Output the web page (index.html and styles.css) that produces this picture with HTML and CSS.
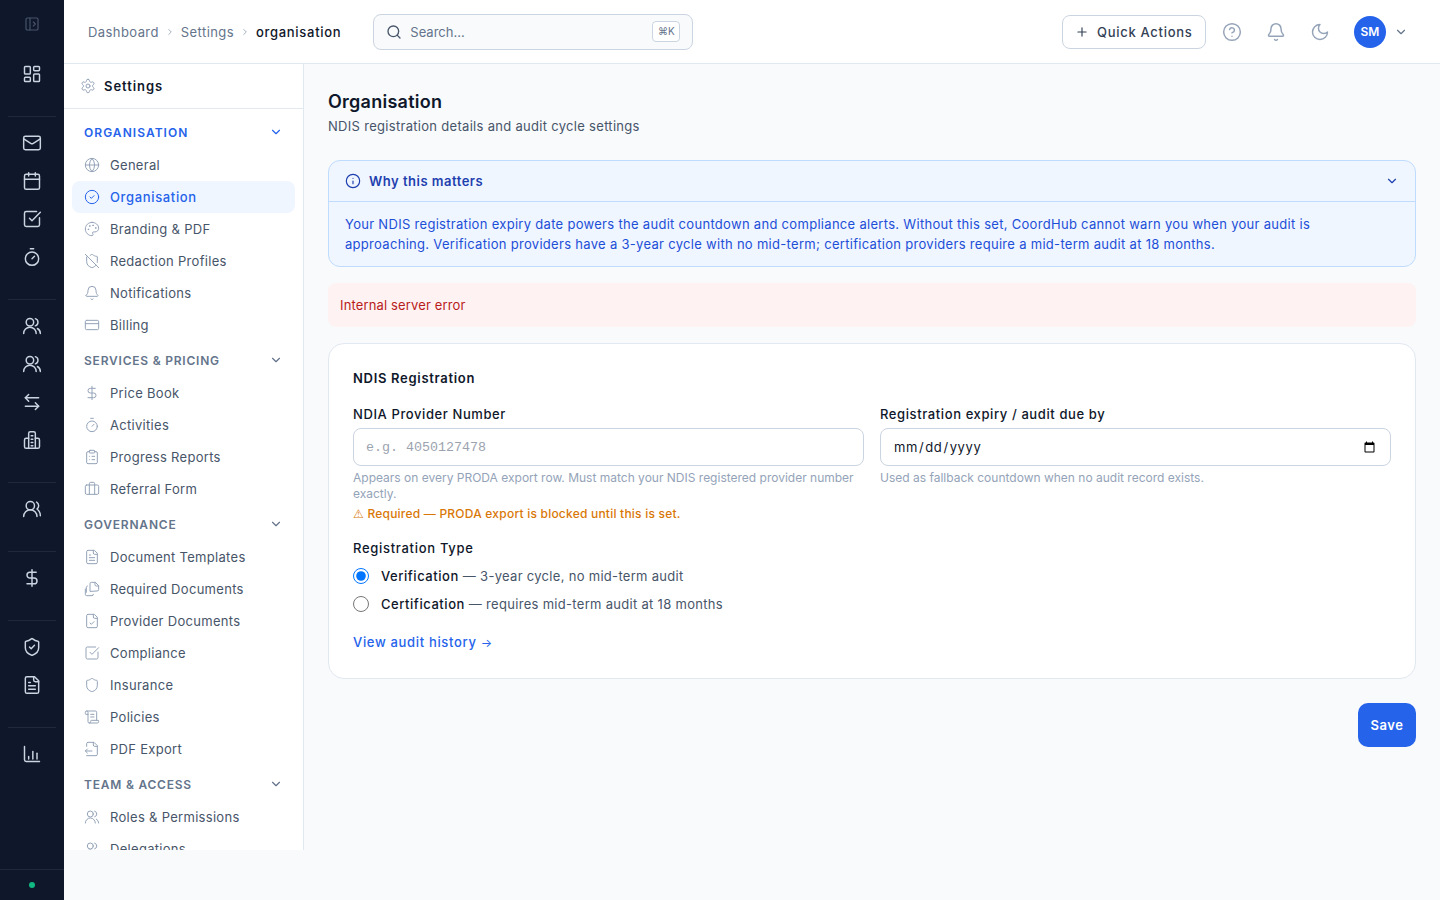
FILE: index.html
```html
<!DOCTYPE html>
<html lang="en">
<head>
    <meta charset="UTF-8">
    <meta name="viewport" content="width=device-width, initial-scale=1.0">
    <title>Organisation Settings</title>
    <link rel="stylesheet" href="styles.css">
</head>
<body>
    <svg class="sprite" xmlns="http://www.w3.org/2000/svg">
        <symbol id="i-panel" viewBox="0 0 24 24"><rect x="3" y="3" width="18" height="18" rx="2"/><path d="M9 3v18"/><path d="m14 9 3 3-3 3"/></symbol>
        <symbol id="i-dashboard" viewBox="0 0 24 24"><rect x="3" y="3" width="7" height="9" rx="1"/><rect x="14" y="3" width="7" height="5" rx="1"/><rect x="14" y="12" width="7" height="9" rx="1"/><rect x="3" y="16" width="7" height="5" rx="1"/></symbol>
        <symbol id="i-mail" viewBox="0 0 24 24"><rect x="2" y="4" width="20" height="16" rx="2"/><path d="m22 7-8.97 5.7a1.94 1.94 0 0 1-2.06 0L2 7"/></symbol>
        <symbol id="i-calendar" viewBox="0 0 24 24"><path d="M8 2v4"/><path d="M16 2v4"/><rect x="3" y="4" width="18" height="18" rx="2"/><path d="M3 10h18"/></symbol>
        <symbol id="i-check-square" viewBox="0 0 24 24"><path d="M21 10.5V19a2 2 0 0 1-2 2H5a2 2 0 0 1-2-2V5a2 2 0 0 1 2-2h12.5"/><path d="m9 11 3 3L22 4"/></symbol>
        <symbol id="i-timer" viewBox="0 0 24 24"><path d="M10 2h4"/><path d="m12 14 3-3"/><circle cx="12" cy="14" r="8"/></symbol>
        <symbol id="i-users" viewBox="0 0 24 24"><circle cx="9.5" cy="7.5" r="4.5"/><path d="M2 21a7.5 7.5 0 0 1 15 0"/><path d="M16 3.2a4.5 4.5 0 0 1 0 8.6"/><path d="M22 21a7 7 0 0 0-3.5-6"/></symbol>
        <symbol id="i-users-round" viewBox="0 0 24 24"><path d="M18 21a8 8 0 0 0-16 0"/><circle cx="10" cy="8" r="5"/><path d="M22 20c0-3.37-2-6.5-4-8a5 5 0 0 0-.45-8.3"/></symbol>
        <symbol id="i-arrows" viewBox="0 0 24 24"><path d="M8 3 4 7l4 4"/><path d="M4 7h16"/><path d="m16 21 4-4-4-4"/><path d="M20 17H4"/></symbol>
        <symbol id="i-building" viewBox="0 0 24 24"><path d="M8 22V4a2 2 0 0 1 2-2h4a2 2 0 0 1 2 2v18"/><path d="M8 10H5a2 2 0 0 0-2 2v8a2 2 0 0 0 2 2h14a2 2 0 0 0 2-2v-8a2 2 0 0 0-2-2h-3"/><path d="M11 7h2"/><path d="M11 11h2"/><path d="M11 15h2"/><path d="M11 19h2"/></symbol>
        <symbol id="i-dollar" viewBox="0 0 24 24"><path d="M12 2v20"/><path d="M17 5H9.5a3.5 3.5 0 0 0 0 7h5a3.5 3.5 0 0 1 0 7H6"/></symbol>
        <symbol id="i-shield-check" viewBox="0 0 24 24"><path d="M20 13c0 5-3.5 7.5-7.66 8.95a1 1 0 0 1-.67-.01C7.5 20.5 4 18 4 13V6a1 1 0 0 1 1-1c2 0 4.5-1.2 6.24-2.72a1.17 1.17 0 0 1 1.52 0C14.51 3.81 17 5 19 5a1 1 0 0 1 1 1z"/><path d="m9 12 2 2 4-4"/></symbol>
        <symbol id="i-shield" viewBox="0 0 24 24"><path d="M20 13c0 5-3.5 7.5-7.66 8.95a1 1 0 0 1-.67-.01C7.5 20.5 4 18 4 13V6a1 1 0 0 1 1-1c2 0 4.5-1.2 6.24-2.72a1.17 1.17 0 0 1 1.52 0C14.51 3.81 17 5 19 5a1 1 0 0 1 1 1z"/></symbol>
        <symbol id="i-shield-off" viewBox="0 0 24 24"><path d="m2 2 20 20"/><path d="M5 5a1 1 0 0 0-1 1v7c0 5 3.5 7.5 7.67 8.94a1 1 0 0 0 .67.01c2.35-.82 4.48-1.97 5.9-3.71"/><path d="M9.309 3.652A12.252 12.252 0 0 0 11.24 2.28a1.17 1.17 0 0 1 1.52 0C14.51 3.81 17 5 19 5a1 1 0 0 1 1 1v7a9.784 9.784 0 0 1-.08 1.264"/></symbol>
        <symbol id="i-file-text" viewBox="0 0 24 24"><path d="M15 2H6a2 2 0 0 0-2 2v16a2 2 0 0 0 2 2h12a2 2 0 0 0 2-2V7Z"/><path d="M14 2v4a2 2 0 0 0 2 2h4"/><path d="M10 9H8"/><path d="M16 13H8"/><path d="M16 17H8"/></symbol>
        <symbol id="i-file-check" viewBox="0 0 24 24"><path d="M15 2H6a2 2 0 0 0-2 2v16a2 2 0 0 0 2 2h12a2 2 0 0 0 2-2V7Z"/><path d="M14 2v4a2 2 0 0 0 2 2h4"/><path d="m9 15 2 2 4-4"/></symbol>
        <symbol id="i-files" viewBox="0 0 24 24"><path d="M9 15V4a2 2 0 0 1 2-2h6l5 5v6a2 2 0 0 1-2 2Z"/><path d="M16.5 2v3.5a2 2 0 0 0 2 2H22"/><path d="M5 7.5a2 2 0 0 0-1.5 2V17"/><path d="M2 12v8a2 2 0 0 0 2 2h8a2 2 0 0 0 2-2"/></symbol>
        <symbol id="i-file-export" viewBox="0 0 24 24"><path d="M4 22h14a2 2 0 0 0 2-2V7l-5-5H6a2 2 0 0 0-2 2v4"/><path d="M14 2v4a2 2 0 0 0 2 2h4"/><path d="M2 15h10"/><path d="m5 12-3 3 3 3"/></symbol>
        <symbol id="i-chart" viewBox="0 0 24 24"><path d="M3 3v16a2 2 0 0 0 2 2h16"/><path d="M8 18v-3"/><path d="M13 18V9"/><path d="M18 18v-7"/></symbol>
        <symbol id="i-gear" viewBox="0 0 24 24"><path d="M12.22 2h-.44a2 2 0 0 0-2 2v.18a2 2 0 0 1-1 1.73l-.43.25a2 2 0 0 1-2 0l-.15-.08a2 2 0 0 0-2.73.73l-.22.38a2 2 0 0 0 .73 2.73l.15.1a2 2 0 0 1 1 1.72v.51a2 2 0 0 1-1 1.74l-.15.09a2 2 0 0 0-.73 2.73l.22.38a2 2 0 0 0 2.73.73l.15-.08a2 2 0 0 1 2 0l.43.25a2 2 0 0 1 1 1.73V20a2 2 0 0 0 2 2h.44a2 2 0 0 0 2-2v-.18a2 2 0 0 1 1-1.73l.43-.25a2 2 0 0 1 2 0l.15.08a2 2 0 0 0 2.73-.73l.22-.39a2 2 0 0 0-.73-2.73l-.15-.08a2 2 0 0 1-1-1.74v-.5a2 2 0 0 1 1-1.74l.15-.09a2 2 0 0 0 .73-2.73l-.22-.38a2 2 0 0 0-2.73-.73l-.15.08a2 2 0 0 1-2 0l-.43-.25a2 2 0 0 1-1-1.73V4a2 2 0 0 0-2-2z"/><circle cx="12" cy="12" r="3"/></symbol>
        <symbol id="i-globe" viewBox="0 0 24 24"><circle cx="12" cy="12" r="10"/><path d="M12 2a14.5 14.5 0 0 0 0 20 14.5 14.5 0 0 0 0-20"/><path d="M2 12h20"/></symbol>
        <symbol id="i-circle-check" viewBox="0 0 24 24"><circle cx="12" cy="12" r="10"/><path d="m9 12 2 2 4-4"/></symbol>
        <symbol id="i-palette" viewBox="0 0 24 24"><circle cx="13.5" cy="6.5" r=".5"/><circle cx="17.5" cy="10.5" r=".5"/><circle cx="8.5" cy="7.5" r=".5"/><circle cx="6.5" cy="12.5" r=".5"/><path d="M12 2C6.5 2 2 6.5 2 12s4.5 10 10 10c.926 0 1.648-.746 1.648-1.688 0-.437-.18-.835-.437-1.125-.29-.289-.438-.652-.438-1.125a1.64 1.64 0 0 1 1.668-1.668h1.996c3.051 0 5.555-2.503 5.555-5.554C21.965 6.012 17.461 2 12 2z"/></symbol>
        <symbol id="i-bell" viewBox="0 0 24 24"><path d="M10.268 21a2 2 0 0 0 3.464 0"/><path d="M3.262 15.326A1 1 0 0 0 4 17h16a1 1 0 0 0 .74-1.673C19.41 13.956 18 12.499 18 8A6 6 0 0 0 6 8c0 4.499-1.411 5.956-2.738 7.326"/></symbol>
        <symbol id="i-card" viewBox="0 0 24 24"><rect x="2" y="5" width="20" height="14" rx="2"/><path d="M2 10h20"/></symbol>
        <symbol id="i-clipboard" viewBox="0 0 24 24"><rect x="8" y="2" width="8" height="4" rx="1"/><path d="M16 4h2a2 2 0 0 1 2 2v14a2 2 0 0 1-2 2H6a2 2 0 0 1-2-2V6a2 2 0 0 1 2-2h2"/><path d="M12 11h4"/><path d="M12 16h4"/><path d="M8 11h.01"/><path d="M8 16h.01"/></symbol>
        <symbol id="i-briefcase" viewBox="0 0 24 24"><path d="M16 20V4a2 2 0 0 0-2-2h-4a2 2 0 0 0-2 2v16"/><rect x="2" y="6" width="20" height="14" rx="2"/></symbol>
        <symbol id="i-scroll" viewBox="0 0 24 24"><path d="M15 12h-5"/><path d="M15 8h-5"/><path d="M19 17V5a2 2 0 0 0-2-2H4"/><path d="M8 21h12a2 2 0 0 0 2-2v-1a1 1 0 0 0-1-1H11a1 1 0 0 0-1 1v1a2 2 0 1 1-4 0V5a2 2 0 1 0-4 0v2a1 1 0 0 0 1 1h3"/></symbol>
        <symbol id="i-chevron-down" viewBox="0 0 24 24"><path d="m6 9 6 6 6-6"/></symbol>
        <symbol id="i-chevron-right" viewBox="0 0 24 24"><path d="m9 18 6-6-6-6"/></symbol>
        <symbol id="i-search" viewBox="0 0 24 24"><circle cx="11" cy="11" r="8"/><path d="m21 21-4.3-4.3"/></symbol>
        <symbol id="i-plus" viewBox="0 0 24 24"><path d="M5 12h14"/><path d="M12 5v14"/></symbol>
        <symbol id="i-help" viewBox="0 0 24 24"><circle cx="12" cy="12" r="10"/><path d="M9.09 9a3 3 0 0 1 5.83 1c0 2-3 3-3 3"/><path d="M12 17h.01"/></symbol>
        <symbol id="i-moon" viewBox="0 0 24 24"><path d="M12 3a6 6 0 0 0 9 9 9 9 0 1 1-9-9Z"/></symbol>
        <symbol id="i-info" viewBox="0 0 24 24"><circle cx="12" cy="12" r="10"/><path d="M12 16v-4"/><path d="M12 8h.01"/></symbol>
    </svg>

    <nav class="rail">
        <div class="rail-toggle"><svg class="rail-icon dim"><use href="#i-panel"/></svg></div>
        <div class="rail-group first">
            <a class="rail-item"><svg class="rail-icon"><use href="#i-dashboard"/></svg></a>
        </div>
        <div class="rail-group">
            <a class="rail-item"><svg class="rail-icon"><use href="#i-mail"/></svg></a>
            <a class="rail-item"><svg class="rail-icon"><use href="#i-calendar"/></svg></a>
            <a class="rail-item"><svg class="rail-icon"><use href="#i-check-square"/></svg></a>
            <a class="rail-item"><svg class="rail-icon"><use href="#i-timer"/></svg></a>
        </div>
        <div class="rail-group">
            <a class="rail-item"><svg class="rail-icon"><use href="#i-users"/></svg></a>
            <a class="rail-item"><svg class="rail-icon"><use href="#i-users"/></svg></a>
            <a class="rail-item"><svg class="rail-icon"><use href="#i-arrows"/></svg></a>
            <a class="rail-item"><svg class="rail-icon"><use href="#i-building"/></svg></a>
        </div>
        <div class="rail-group">
            <a class="rail-item"><svg class="rail-icon"><use href="#i-users-round"/></svg></a>
        </div>
        <div class="rail-group">
            <a class="rail-item"><svg class="rail-icon"><use href="#i-dollar"/></svg></a>
        </div>
        <div class="rail-group">
            <a class="rail-item"><svg class="rail-icon"><use href="#i-shield-check"/></svg></a>
            <a class="rail-item"><svg class="rail-icon"><use href="#i-file-text"/></svg></a>
        </div>
        <div class="rail-group">
            <a class="rail-item"><svg class="rail-icon"><use href="#i-chart"/></svg></a>
        </div>
        <div class="rail-status"><span class="status-dot"></span></div>
    </nav>

    <div class="shell">
        <header class="topbar">
            <div class="breadcrumb">
                <span>Dashboard</span>
                <svg class="crumb-sep"><use href="#i-chevron-right"/></svg>
                <span>Settings</span>
                <svg class="crumb-sep"><use href="#i-chevron-right"/></svg>
                <span class="crumb-current">organisation</span>
            </div>
            <label class="search">
                <svg class="search-icon"><use href="#i-search"/></svg>
                <input type="text" placeholder="Search...">
                <kbd>⌘K</kbd>
            </label>
            <div class="topbar-right">
                <button class="quick-btn"><svg class="quick-icon"><use href="#i-plus"/></svg>Quick Actions</button>
                <svg class="top-icon"><use href="#i-help"/></svg>
                <svg class="top-icon"><use href="#i-bell"/></svg>
                <svg class="top-icon"><use href="#i-moon"/></svg>
                <span class="avatar">SM</span>
                <svg class="avatar-caret"><use href="#i-chevron-down"/></svg>
            </div>
        </header>

        <div class="content">
            <aside class="settings-nav">
                <div class="settings-head">
                    <svg class="nav-icon"><use href="#i-gear"/></svg>
                    <span>Settings</span>
                </div>
                <div class="settings-list">
                    <div class="nav-section active">ORGANISATION<svg class="section-caret"><use href="#i-chevron-down"/></svg></div>
                    <a class="nav-item"><svg class="nav-icon"><use href="#i-globe"/></svg>General</a>
                    <a class="nav-item active"><svg class="nav-icon"><use href="#i-circle-check"/></svg>Organisation</a>
                    <a class="nav-item"><svg class="nav-icon"><use href="#i-palette"/></svg>Branding &amp; PDF</a>
                    <a class="nav-item"><svg class="nav-icon"><use href="#i-shield-off"/></svg>Redaction Profiles</a>
                    <a class="nav-item"><svg class="nav-icon"><use href="#i-bell"/></svg>Notifications</a>
                    <a class="nav-item"><svg class="nav-icon"><use href="#i-card"/></svg>Billing</a>

                    <div class="nav-section">SERVICES &amp; PRICING<svg class="section-caret"><use href="#i-chevron-down"/></svg></div>
                    <a class="nav-item"><svg class="nav-icon"><use href="#i-dollar"/></svg>Price Book</a>
                    <a class="nav-item"><svg class="nav-icon"><use href="#i-timer"/></svg>Activities</a>
                    <a class="nav-item"><svg class="nav-icon"><use href="#i-clipboard"/></svg>Progress Reports</a>
                    <a class="nav-item"><svg class="nav-icon"><use href="#i-briefcase"/></svg>Referral Form</a>

                    <div class="nav-section">GOVERNANCE<svg class="section-caret"><use href="#i-chevron-down"/></svg></div>
                    <a class="nav-item"><svg class="nav-icon"><use href="#i-file-text"/></svg>Document Templates</a>
                    <a class="nav-item"><svg class="nav-icon"><use href="#i-files"/></svg>Required Documents</a>
                    <a class="nav-item"><svg class="nav-icon"><use href="#i-file-check"/></svg>Provider Documents</a>
                    <a class="nav-item"><svg class="nav-icon"><use href="#i-check-square"/></svg>Compliance</a>
                    <a class="nav-item"><svg class="nav-icon"><use href="#i-shield"/></svg>Insurance</a>
                    <a class="nav-item"><svg class="nav-icon"><use href="#i-scroll"/></svg>Policies</a>
                    <a class="nav-item"><svg class="nav-icon"><use href="#i-file-export"/></svg>PDF Export</a>

                    <div class="nav-section">TEAM &amp; ACCESS<svg class="section-caret"><use href="#i-chevron-down"/></svg></div>
                    <a class="nav-item"><svg class="nav-icon"><use href="#i-users"/></svg>Roles &amp; Permissions</a>
                    <a class="nav-item"><svg class="nav-icon"><use href="#i-users"/></svg>Delegations</a>
                </div>
            </aside>

            <main class="main">
                <h1>Organisation</h1>
                <p class="subtitle">NDIS registration details and audit cycle settings</p>

                <section class="why-box">
                    <div class="why-head">
                        <svg class="why-icon"><use href="#i-info"/></svg>
                        <span>Why this matters</span>
                        <svg class="why-caret"><use href="#i-chevron-down"/></svg>
                    </div>
                    <p class="why-body">Your NDIS registration expiry date powers the audit countdown and compliance alerts. Without this set, CoordHub cannot warn you when your audit is approaching. Verification providers have a 3-year cycle with no mid-term; certification providers require a mid-term audit at 18 months.</p>
                </section>

                <div class="error-box">Internal server error</div>

                <section class="card">
                    <h2>NDIS Registration</h2>
                    <div class="field-grid">
                        <div class="field">
                            <label for="providerNumber">NDIA Provider Number</label>
                            <input class="mono" type="text" id="providerNumber" placeholder="e.g. 4050127478">
                            <p class="hint">Appears on every PRODA export row. Must match your NDIS registered provider number exactly.</p>
                            <p class="warn"><span class="symbol">⚠</span> Required — PRODA export is blocked until this is set.</p>
                        </div>
                        <div class="field">
                            <label for="expiry">Registration expiry / audit due by</label>
                            <input type="date" id="expiry">
                            <p class="hint">Used as fallback countdown when no audit record exists.</p>
                        </div>
                    </div>
                    <div class="type-label">Registration Type</div>
                    <label class="radio-row"><input type="radio" name="regType" checked><span><strong>Verification</strong> — 3-year cycle, no mid-term audit</span></label>
                    <label class="radio-row"><input type="radio" name="regType"><span><strong>Certification</strong> — requires mid-term audit at 18 months</span></label>
                    <a class="audit-link">View audit history <span class="link-arrow">→</span></a>
                </section>

                <div class="actions"><button class="save-btn">Save</button></div>
            </main>
        </div>
    </div>
</body>
</html>
```

FILE: styles.css
```css
* {
    box-sizing: border-box;
}

body {
    margin: 0;
    display: flex;
    height: 900px;
    overflow: hidden;
    background: #f8fafc;
    color: #0f172a;
    font-family: Inter, 'Liberation Sans', sans-serif;
    font-size: 13px;
    letter-spacing: 0.3px;
}

svg {
    fill: none;
    stroke: currentColor;
    stroke-width: 2;
    stroke-linecap: round;
    stroke-linejoin: round;
    flex-shrink: 0;
}

.sprite {
    display: none;
}

.symbol {
    font-family: 'Liberation Sans', sans-serif;
    letter-spacing: 0;
}

/* left rail */
.rail {
    width: 64px;
    flex-shrink: 0;
    display: flex;
    flex-direction: column;
    background: #0f172a;
    color: #cbd5e1;
}

.rail-toggle {
    height: 48px;
    display: flex;
    align-items: center;
    justify-content: center;
}

.rail-group {
    margin: 0 8px;
    padding: 7px 0 23px;
    border-top: 1px solid #1e293b;
}

.rail-group.first {
    border-top: none;
}

.rail-item {
    height: 38px;
    display: flex;
    align-items: center;
    justify-content: center;
}

.rail-icon {
    width: 20px;
    height: 20px;
    stroke-width: 1.75;
}

.rail-icon.dim {
    width: 16px;
    height: 16px;
    color: #475569;
}

.rail-status {
    margin-top: auto;
    height: 31px;
    border-top: 1px solid #1e293b;
    display: flex;
    align-items: center;
    justify-content: center;
}

.status-dot {
    width: 6px;
    height: 6px;
    border-radius: 50%;
    background: #10b981;
}

/* top bar */
.shell {
    flex: 1;
    min-width: 0;
    display: flex;
    flex-direction: column;
}

.topbar {
    height: 64px;
    flex-shrink: 0;
    display: flex;
    align-items: center;
    padding: 0 24px;
    background: #fff;
    border-bottom: 1px solid #e2e8f0;
}

.breadcrumb {
    display: flex;
    align-items: center;
    gap: 6px;
    color: #64748b;
    margin-right: 32px;
    letter-spacing: 0.42px;
}

.crumb-sep {
    width: 10px;
    height: 10px;
    color: #94a3b8;
}

.crumb-current {
    color: #0f172a;
    font-weight: 500;
    letter-spacing: 0.7px;
}

.search {
    width: 320px;
    height: 36px;
    display: flex;
    align-items: center;
    gap: 8px;
    padding: 0 12px;
    background: #f8fafc;
    border: 1px solid #cbd5e1;
    border-radius: 8px;
}

.search-icon {
    width: 16px;
    height: 16px;
    color: #475569;
}

.search input {
    flex: 1;
    min-width: 0;
    border: none;
    outline: none;
    padding: 0;
    background: transparent;
    font: inherit;
    letter-spacing: 0;
}

.search input::placeholder {
    color: #64748b;
}

kbd {
    width: 28px;
    padding: 2px 0;
    text-align: center;
    background: #fff;
    border: 1px solid #cbd5e1;
    border-radius: 4px;
    color: #64748b;
    font-family: inherit;
    font-size: 10px;
    line-height: 15px;
    letter-spacing: 0;
}

.topbar-right {
    margin-left: auto;
    display: flex;
    align-items: center;
}

.quick-btn {
    width: 144px;
    height: 34px;
    display: flex;
    align-items: center;
    gap: 8px;
    padding: 0 12px;
    background: #fff;
    border: 1px solid #cbd5e1;
    border-radius: 8px;
    color: #334155;
    font: 500 13px Inter, sans-serif;
    letter-spacing: 0.7px;
    white-space: nowrap;
    margin-right: 16px;
}

.quick-icon {
    width: 14px;
    height: 14px;
}

.top-icon {
    width: 20px;
    height: 20px;
    margin-right: 24px;
    color: #94a3b8;
    stroke-width: 1.75;
}

.avatar {
    width: 32px;
    height: 32px;
    border-radius: 50%;
    background: #2563eb;
    color: #fff;
    font-size: 12px;
    font-weight: 600;
    letter-spacing: 0;
    display: flex;
    align-items: center;
    justify-content: center;
}

.avatar-caret {
    width: 14px;
    height: 14px;
    margin: 0 8px;
    color: #64748b;
}

/* settings list */
.content {
    flex: 1;
    min-height: 0;
    display: flex;
}

.settings-nav {
    width: 240px;
    height: 786px;
    flex-shrink: 0;
    overflow: hidden;
    background: #fff;
    border-right: 1px solid #e2e8f0;
}

.settings-head {
    height: 45px;
    display: flex;
    align-items: center;
    gap: 8px;
    padding: 0 16px;
    border-bottom: 1px solid #e2e8f0;
    font-weight: 600;
    letter-spacing: 0.95px;
}

.settings-list {
    padding: 6px 8px 0;
}

.nav-section {
    height: 34px;
    margin-top: 2px;
    display: flex;
    align-items: center;
    justify-content: space-between;
    padding: 0 12px;
    color: #64748b;
    font-size: 12px;
    font-weight: 600;
    letter-spacing: 0.78px;
}

.nav-section.active {
    color: #2563eb;
    margin-top: 0;
    letter-spacing: 1.05px;
}

.section-caret {
    width: 14px;
    height: 14px;
}

.nav-item {
    height: 32px;
    display: flex;
    align-items: center;
    gap: 10px;
    padding: 0 12px;
    border-radius: 8px;
    color: #475569;
}

.nav-item.active {
    background: #eff6ff;
    color: #2563eb;
    font-weight: 500;
    letter-spacing: 0.65px;
}

.nav-icon {
    width: 16px;
    height: 16px;
    color: #94a3b8;
    stroke-width: 1.5;
}

.nav-item.active .nav-icon {
    color: #2563eb;
}

/* main column */
.main {
    flex: 1;
    min-width: 0;
    padding: 24px;
}

h1 {
    margin: 0;
    font-size: 18px;
    font-weight: 600;
    line-height: 28px;
    letter-spacing: 0.25px;
}

.subtitle {
    margin: 0 0 24px;
    color: #475569;
    line-height: 20px;
}

.why-box {
    background: #eff6ff;
    border: 1px solid #bfdbfe;
    border-radius: 12px;
}

.why-head {
    height: 41px;
    display: flex;
    align-items: center;
    gap: 8px;
    padding: 0 16px;
    border-bottom: 1px solid #bfdbfe;
    color: #1e40af;
    font-weight: 600;
    letter-spacing: 0.5px;
}

.why-icon {
    width: 16px;
    height: 16px;
    stroke-width: 1.75;
}

.why-caret {
    width: 14px;
    height: 14px;
    margin-left: auto;
}

.why-body {
    margin: 0;
    padding: 12px 40px 12px 16px;
    color: #1d4ed8;
    line-height: 20px;
    letter-spacing: 0.3px;
}

.error-box {
    margin: 16px 0;
    padding: 12px;
    background: #fef2f2;
    border-radius: 8px;
    color: #b91c1c;
    line-height: 20px;
    letter-spacing: 0.14px;
}

.card {
    padding: 24px;
    background: #fff;
    border: 1px solid #e2e8f0;
    border-radius: 16px;
}

h2 {
    margin: 0 0 16px;
    font-size: 13px;
    font-weight: 600;
    line-height: 20px;
    letter-spacing: 0.7px;
}

.field-grid {
    display: grid;
    grid-template-columns: 1fr 1fr;
    gap: 16px;
}

.field label {
    display: block;
    margin-bottom: 4px;
    font-weight: 500;
    line-height: 20px;
    letter-spacing: 0.6px;
}

.field input {
    width: 100%;
    height: 38px;
    padding: 0 12px;
    border: 1px solid #cbd5e1;
    border-radius: 8px;
    background: #fff;
    color: #0f172a;
    font: 13px Inter, sans-serif;
    letter-spacing: 0.6px;
}

.field input.mono {
    font: 13.33px 'Liberation Mono', monospace;
    letter-spacing: 0;
}

.field input.mono::placeholder {
    color: #9ca3af;
}

.hint {
    margin: 4px 0 0;
    color: #94a3b8;
    font-size: 12px;
    line-height: 16px;
    letter-spacing: 0;
}

.warn {
    margin: 4px 0 0;
    color: #d97706;
    font-size: 12px;
    font-weight: 500;
    line-height: 16px;
    letter-spacing: 0.22px;
}

.type-label {
    margin-top: 16px;
    font-weight: 500;
    line-height: 20px;
    letter-spacing: 0.7px;
}

.radio-row {
    display: flex;
    align-items: center;
    gap: 12px;
    margin-top: 8px;
    color: #475569;
    line-height: 20px;
}

.radio-row input {
    width: 16px;
    height: 16px;
    margin: 0;
}

.radio-row strong {
    color: #0f172a;
    font-weight: 500;
    letter-spacing: 0.55px;
}

.audit-link {
    display: block;
    margin: 18px 0 1px;
    color: #2563eb;
    font-weight: 500;
    line-height: 20px;
    letter-spacing: 0.67px;
}

.link-arrow {
    font-size: 12px;
    font-weight: 400;
    letter-spacing: 0;
}

.actions {
    display: flex;
    justify-content: flex-end;
    margin-top: 24px;
}

.save-btn {
    width: 58px;
    height: 44px;
    border: none;
    border-radius: 10px;
    background: #2563eb;
    color: #fff;
    font: 600 13px Inter, sans-serif;
    letter-spacing: 0.5px;
}
```
